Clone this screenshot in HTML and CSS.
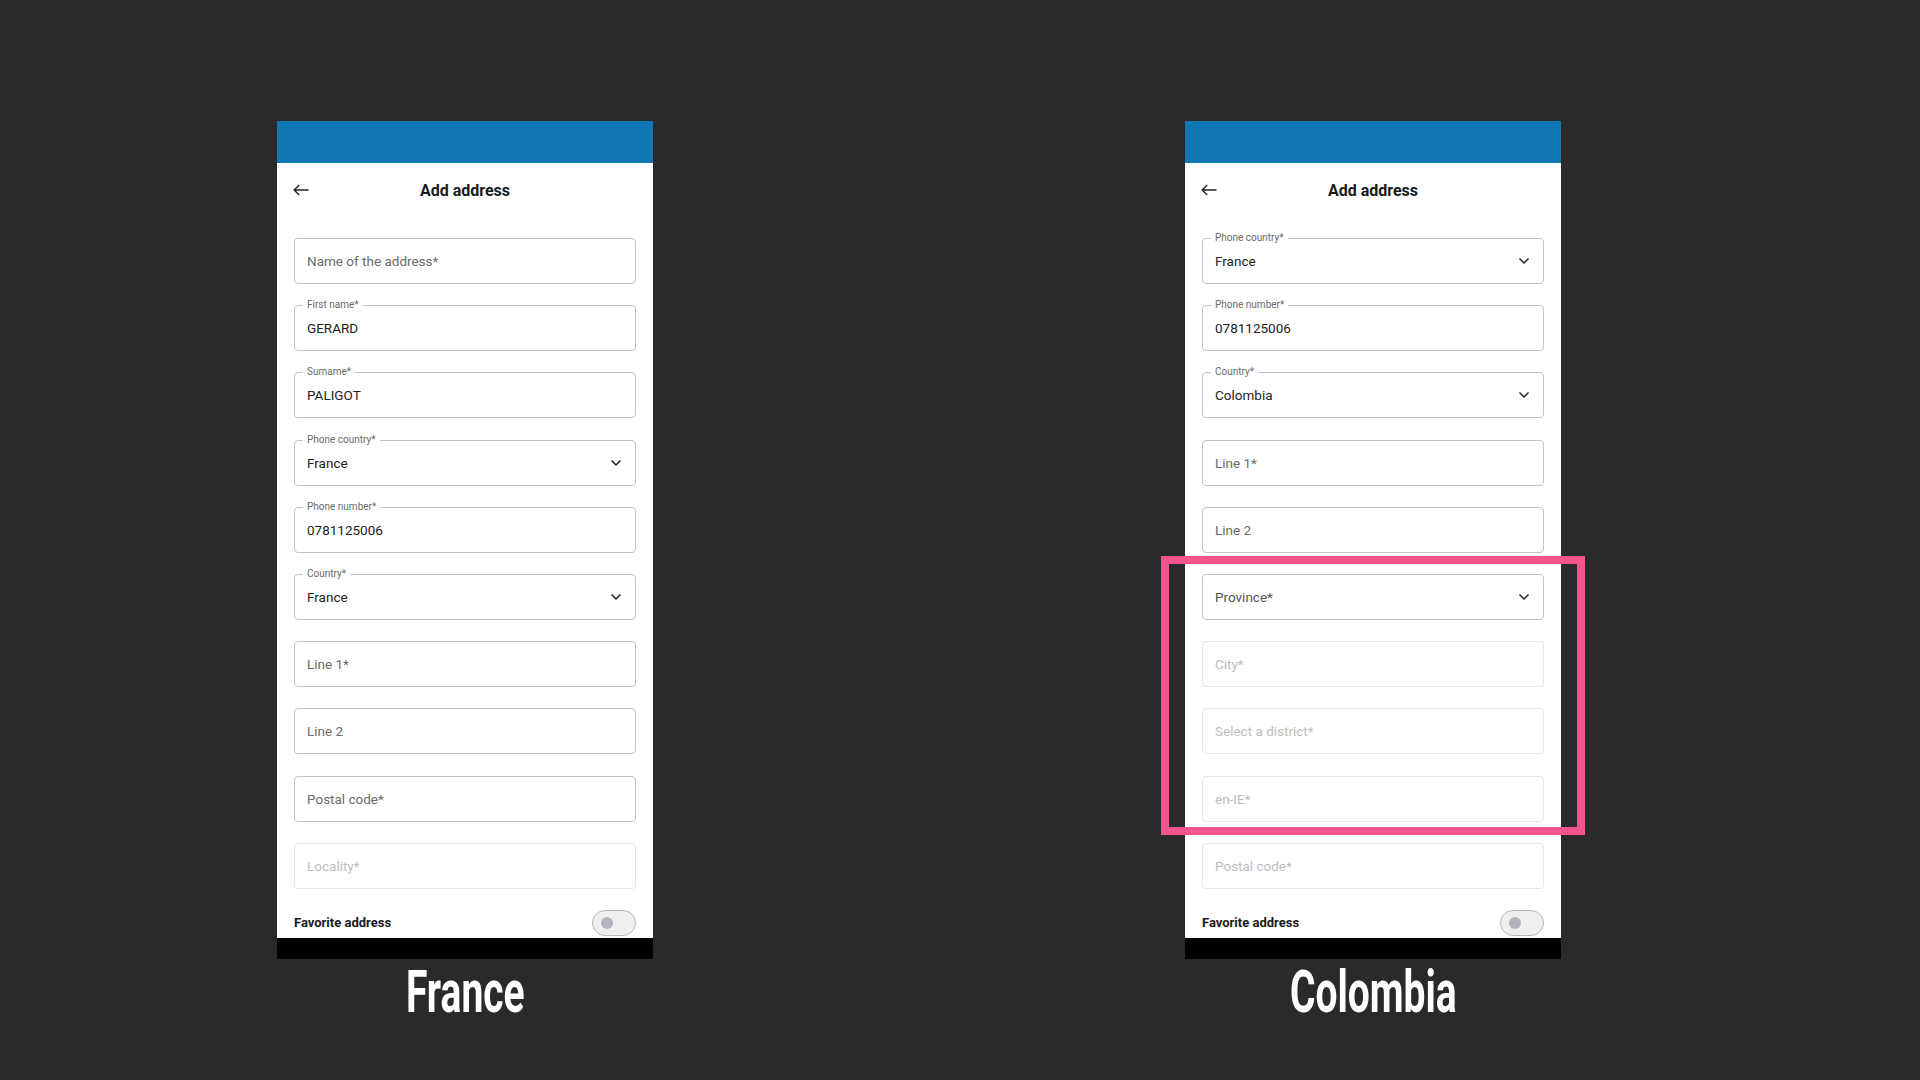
FILE: index.html
```html
<!DOCTYPE html>
<html lang="en">
<head>
<meta charset="utf-8">
<title>Add address – France vs Colombia</title>
<link rel="stylesheet" href="styles.css">
</head>
<body>
<main class="stage">
  <section class="column">
    <div class="phone">
      <div class="statusbar"></div>
      <header class="appbar">
        <svg class="back" width="16" height="12" viewBox="0 0 16 12"><path d="M15.5 6H1.2M6.2 1L1.2 6l5 5" fill="none" stroke="#222" stroke-width="1.4"/></svg>
        <h1 class="title">Add address</h1>
        <span></span>
      </header>
      <div class="form">
        <div class="field"><span class="ph">Name of the address*</span></div>
        <div class="field"><span class="flabel">First name*</span><span class="val">GERARD</span></div>
        <div class="field"><span class="flabel">Surname*</span><span class="val">PALIGOT</span></div>
        <div class="field"><span class="flabel">Phone country*</span><span class="val">France</span><svg class="chev" width="12" height="8" viewBox="0 0 12 8"><path d="M1.5 1.5L6 6l4.5-4.5" fill="none" stroke="#222" stroke-width="1.5"/></svg></div>
        <div class="field"><span class="flabel">Phone number*</span><span class="val">0781125006</span></div>
        <div class="field"><span class="flabel">Country*</span><span class="val">France</span><svg class="chev" width="12" height="8" viewBox="0 0 12 8"><path d="M1.5 1.5L6 6l4.5-4.5" fill="none" stroke="#222" stroke-width="1.5"/></svg></div>
        <div class="field"><span class="ph">Line 1*</span></div>
        <div class="field"><span class="ph">Line 2</span></div>
        <div class="field"><span class="ph">Postal code*</span></div>
        <div class="field disabled"><span class="ph">Locality*</span></div>
        <div class="fav"><span class="fav-text">Favorite address</span><span class="toggle"><span class="knob"></span></span></div>
      </div>
      <div class="navbar"></div>
    </div>
    <div class="caption"><span class="caption-text">France</span></div>
  </section>

  <section class="column">
    <div class="phone">
      <div class="statusbar"></div>
      <header class="appbar">
        <svg class="back" width="16" height="12" viewBox="0 0 16 12"><path d="M15.5 6H1.2M6.2 1L1.2 6l5 5" fill="none" stroke="#222" stroke-width="1.4"/></svg>
        <h1 class="title">Add address</h1>
        <span></span>
      </header>
      <div class="form">
        <div class="field"><span class="flabel">Phone country*</span><span class="val">France</span><svg class="chev" width="12" height="8" viewBox="0 0 12 8"><path d="M1.5 1.5L6 6l4.5-4.5" fill="none" stroke="#222" stroke-width="1.5"/></svg></div>
        <div class="field"><span class="flabel">Phone number*</span><span class="val">0781125006</span></div>
        <div class="field"><span class="flabel">Country*</span><span class="val">Colombia</span><svg class="chev" width="12" height="8" viewBox="0 0 12 8"><path d="M1.5 1.5L6 6l4.5-4.5" fill="none" stroke="#222" stroke-width="1.5"/></svg></div>
        <div class="field"><span class="ph">Line 1*</span></div>
        <div class="field"><span class="ph">Line 2</span></div>
        <div class="field"><span class="ph dark">Province*</span><svg class="chev" width="12" height="8" viewBox="0 0 12 8"><path d="M1.5 1.5L6 6l4.5-4.5" fill="none" stroke="#222" stroke-width="1.5"/></svg></div>
        <div class="field disabled"><span class="ph">City*</span></div>
        <div class="field disabled"><span class="ph">Select a district*</span></div>
        <div class="field disabled"><span class="ph">en-IE*</span></div>
        <div class="field disabled"><span class="ph">Postal code*</span></div>
        <div class="fav"><span class="fav-text">Favorite address</span><span class="toggle"><span class="knob"></span></span></div>
      </div>
      <div class="navbar"></div>
    </div>
    <div class="highlight"></div>
    <div class="caption"><span class="caption-text">Colombia</span></div>
  </section>
</main>
</body>
</html>
```

FILE: styles.css
```css
* { box-sizing: border-box; }
html, body {
  margin: 0;
  padding: 0;
  width: 1920px;
  height: 1080px;
  background: #2a2a2a;
  overflow: hidden;
  font-family: Roboto, "Liberation Sans", sans-serif;
}
.stage {
  display: flex;
  gap: 532px;
  padding: 121px 0 0 277px;
}
.column {
  position: relative;
  width: 376px;
  display: flex;
  flex-direction: column;
}
.phone {
  width: 376px;
  background: #ffffff;
  display: flex;
  flex-direction: column;
}
.statusbar {
  height: 42px;
  background: #1176b4;
}
.appbar {
  height: 54px;
  display: grid;
  grid-template-columns: 1fr auto 1fr;
  align-items: center;
  padding: 0 16px;
}
.back { display: block; }
.title {
  margin: 0;
  font-size: 16px;
  font-weight: 700;
  color: #1a1a1a;
}
.form {
  display: flex;
  flex-direction: column;
  gap: 21.2px;
  padding: 21px 17px 0;
}
.field {
  position: relative;
  height: 46px;
  border: 1px solid #c4c4c4;
  border-radius: 4px;
  display: flex;
  align-items: center;
  justify-content: space-between;
  padding: 0 13px 0 12px;
  font-size: 13.5px;
}
.field.disabled {
  border-color: #e6e6e6;
}
.ph { color: #6a6a6a; }
.ph.dark { color: #555; }
.field.disabled .ph { color: #bdbdbd; }
.val { color: #222; }
.flabel {
  position: absolute;
  left: 8px;
  top: -7px;
  padding: 0 4px;
  background: #fff;
  font-size: 10px;
  line-height: 12px;
  color: #6a6a6a;
}
.chev { display: block; }
.fav {
  display: flex;
  align-items: center;
  justify-content: space-between;
  height: 26px;
  margin-bottom: 2px;
}
.fav-text {
  font-size: 13px;
  font-weight: 700;
  color: #1a1a1a;
}
.toggle {
  width: 44px;
  height: 26px;
  border: 1.5px solid #b8b8b8;
  border-radius: 13px;
  background: #efeff1;
  display: flex;
  align-items: center;
  padding-left: 8px;
}
.knob {
  width: 12px;
  height: 12px;
  border-radius: 50%;
  background: #b2b5be;
}
.navbar {
  height: 21px;
  background: #000;
}
.caption {
  margin-top: 3px;
  height: 60px;
  display: flex;
  justify-content: center;
}
.caption-text {
  display: inline-block;
  font-family: Roboto, "Liberation Sans", sans-serif;
  font-weight: 700;
  font-size: 60px;
  line-height: 60px;
  color: #ffffff;
  transform: scaleX(0.65);
}
.highlight {
  position: absolute;
  left: -24px;
  top: 435px;
  width: 424px;
  height: 279px;
  border: 8px solid #f4558f;
}
```
